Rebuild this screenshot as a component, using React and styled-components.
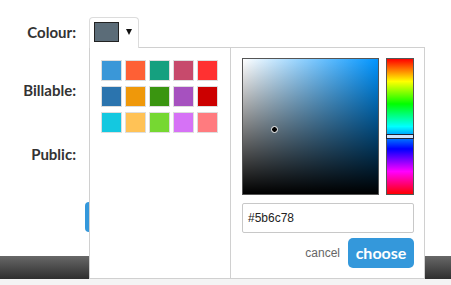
import React from "react";
import styled, { createGlobalStyle } from "styled-components";

const GlobalStyle = createGlobalStyle`
  html, body { margin: 0; padding: 0; background: #fff; }
  body { font-family: Lato, "Liberation Sans", sans-serif; color: #333; }
  * { box-sizing: border-box; }
`;

const Page = styled.div`
  position: relative;
  width: 451px;
  height: 285px;
  overflow: hidden;
  padding-top: 17px;
`;

const Form = styled.div`
  display: flex;
  flex-direction: column;
`;

const Row = styled.div`
  display: grid;
  grid-template-columns: 76px 1fr;
  column-gap: 13px;
  align-items: center;
  height: ${(p) => p.$h || 30}px;
  margin-top: ${(p) => p.$mt || 0}px;
`;

const Label = styled.div`
  text-align: right;
  font-weight: 700;
  font-size: 15px;
  color: #333;
  margin-top: -2px;
`;

const TriggerWrap = styled.div`
  position: relative;
  align-self: start;
  width: 50px;
`;

const Trigger = styled.div`
  position: relative;
  z-index: 2;
  width: 50px;
  height: 31px;
  background: #fff;
  border: 1px solid #dcdcdc;
  border-bottom: none;
  border-radius: 4px 4px 0 0;
  display: flex;
  align-items: flex-start;
  padding: 4px 0 0 4px;
  gap: 7px;
`;

const Current = styled.div`
  width: 25px;
  height: 20px;
  background: ${(p) => p.$c};
  border: 1px solid #222;
`;

const Caret = styled.div`
  margin-top: 7px;
  width: 0;
  height: 0;
  border-left: 3px solid transparent;
  border-right: 3px solid transparent;
  border-top: 6px solid #111;
`;

const Popup = styled.div`
  position: absolute;
  z-index: 1;
  top: 30px;
  left: 0;
  width: 336px;
  height: 232px;
  background: #fff;
  border: 1px solid #d0d0d0;
  display: flex;
`;

const Palette = styled.div`
  width: 141px;
  border-right: 1px solid #d0d0d0;
  padding: 12px 0 0 11px;
`;

const SwatchGrid = styled.div`
  display: grid;
  grid-template-columns: repeat(5, 21px);
  grid-auto-rows: 21px;
  column-gap: 3px;
  row-gap: 5px;
`;

const Swatch = styled.div`
  background: ${(p) => p.$c};
  border: 1px solid #dedede;
`;

const Picker = styled.div`
  flex: 1;
  padding: 10px 0 0 11px;
  display: flex;
  flex-direction: column;
`;

const Fields = styled.div`
  display: flex;
  gap: 7px;
`;

const SV = styled.div`
  position: relative;
  width: 137px;
  height: 137px;
  border: 1px solid #555;
  background: linear-gradient(to top, #000, rgba(0, 0, 0, 0)),
    linear-gradient(to right, #fff, hsl(205, 100%, 50%));
`;

const Dot = styled.div`
  position: absolute;
  left: 28px;
  top: 67px;
  width: 7px;
  height: 7px;
  border-radius: 50%;
  background: #000;
  border: 1px solid #fff;
`;

const HueBar = styled.div`
  position: relative;
  width: 28px;
  height: 137px;
  border: 1px solid #555;
  background: linear-gradient(
    to bottom,
    #ff0000 0%,
    #ffff00 16.6%,
    #00ff00 33.3%,
    #00ffff 50%,
    #0000ff 66.6%,
    #ff00ff 83.3%,
    #ff0000 100%
  );
`;

const HueMarker = styled.div`
  position: absolute;
  left: -1px;
  right: -1px;
  top: 75px;
  height: 5px;
  background: #cfe5ff;
  border: 1px solid #223;
`;

const HexInput = styled.div`
  margin-top: 8px;
  width: 172px;
  height: 30px;
  border: 1px solid #c8c8c8;
  border-radius: 2px;
  padding-left: 5px;
  display: flex;
  align-items: center;
  font-family: "Liberation Sans", Arial, sans-serif;
  font-size: 12px;
  color: #222;
`;

const Actions = styled.div`
  margin-top: 5px;
  width: 172px;
  display: flex;
  justify-content: flex-end;
  align-items: center;
  gap: 8px;
`;

const Cancel = styled.span`
  font-family: "Liberation Sans", Arial, sans-serif;
  font-size: 12px;
  color: #666;
`;

const Choose = styled.div`
  width: 66px;
  height: 30px;
  border-radius: 5px;
  background: #3498db;
  color: #fff;
  font-weight: 700;
  font-size: 16px;
  display: flex;
  align-items: center;
  justify-content: center;
  padding-bottom: 2px;
`;

const Control = styled.div``;

const SaveRow = styled.div`
  margin-top: 32px;
  padding-left: 85px;
`;

const SaveButton = styled.div`
  width: 70px;
  height: 30px;
  border-radius: 4px;
  background: #3498db;
`;

const Footer = styled.div`
  margin-top: 24px;
`;

const Band = styled.div`
  height: 23px;
  background: linear-gradient(to bottom, #686868, #2e2e2e);
`;

const Links = styled.div`
  height: 20px;
  background: #f4f4f4;
  display: grid;
  grid-template-columns: 78px 75px 80px 177px 60px;
  padding-top: 2px;
  font-weight: 700;
  font-size: 14px;
  color: #111;
`;

const Link = styled.span`
  color: ${(p) => p.$c || "#111"};
`;

const palette = [
  "#3a97d8", "#fe6035", "#15a07f", "#c74a6c", "#ff3131",
  "#2b74ae", "#ef980a", "#3a9510", "#a651bf", "#cc0000",
  "#14c8e0", "#ffc256", "#76d832", "#d672f6", "#ff7b7f",
];

export default function App() {
  return (
    <>
      <GlobalStyle />
      <Page>
        <Form>
          <Row $h={31}>
            <Label>Colour:</Label>
            <TriggerWrap>
              <Trigger>
                <Current $c="#5b6c78" />
                <Caret />
              </Trigger>
              <Popup>
                <Palette>
                  <SwatchGrid>
                    {palette.map((c) => (
                      <Swatch key={c} $c={c} />
                    ))}
                  </SwatchGrid>
                </Palette>
                <Picker>
                  <Fields>
                    <SV>
                      <Dot />
                    </SV>
                    <HueBar>
                      <HueMarker />
                    </HueBar>
                  </Fields>
                  <HexInput>#5b6c78</HexInput>
                  <Actions>
                    <Cancel>cancel</Cancel>
                    <Choose>choose</Choose>
                  </Actions>
                </Picker>
              </Popup>
            </TriggerWrap>
          </Row>
          <Row $mt={28}>
            <Label>Billable:</Label>
            <Control />
          </Row>
          <Row $mt={34}>
            <Label>Public:</Label>
            <Control />
          </Row>
          <SaveRow>
            <SaveButton />
          </SaveRow>
        </Form>
        <Footer>
          <Band />
          <Links>
            <Link>Cancel</Link>
            <Link>Projects</Link>
            <Link $c="#2a7ab8">Clients</Link>
            <Link>Fill</Link>
            <Link>delete</Link>
          </Links>
        </Footer>
      </Page>
    </>
  );
}
